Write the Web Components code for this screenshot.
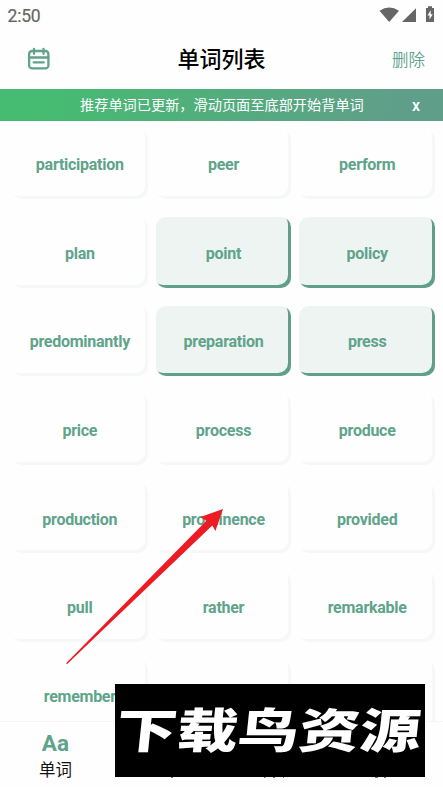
<!DOCTYPE html>
<html lang="zh-CN">
<head>
<meta charset="utf-8">
<title>单词列表</title>
<style>
html,body{margin:0;height:787px;overflow:hidden;background:#fefefe}
</style>
</head>
<body>
<word-app></word-app>
<script>
const define = (name, html) => customElements.define(name, class extends HTMLElement {
  constructor() {
    super();
    const t = document.createElement('template');
    t.innerHTML = html;
    this.attachShadow({mode: 'open'}).append(t.content.cloneNode(true));
  }
});

define('status-bar', `<style>
:host{display:flex;height:30px;align-items:center;justify-content:space-between;padding:0 7px 0 7.5px;box-sizing:border-box;color:#666;font:400 17.5px/30px Roboto,sans-serif}
svg{display:block}
span{padding-top:1px;letter-spacing:-.2px;-webkit-text-stroke:.2px #666}
</style><span>2:50</span>
<svg width="58" height="30" viewBox="378 0 58 30" fill="#666"><path d="M379.5 10.8Q389.2 4 399 10.8L389.2 22Z"/><path d="M416 8.3V22H402Z"/><path fill-rule="evenodd" d="M426 8h2V6.3h4V8h2v14h-8ZM430.7 10.2l-3.2 5.2h2v4.2l3.2-5.4h-2Z"/></svg>`);

define('title-bar', `<style>
:host{display:grid;grid-template-columns:78px 1fr 78px;height:58.5px;align-items:center;font-family:Roboto,"Noto Sans CJK SC",sans-serif;color:#000}
svg{display:block;margin-left:27px}
h1{margin:2px 0 0;text-align:center;font-size:22px;line-height:32px;font-weight:500}
a{color:#60a38b;font-size:16.5px;text-align:right;padding-right:18px;font-weight:350}
</style>
<svg width="24" height="24" viewBox="27 47 24 24" fill="none" stroke="#60a38b" stroke-width="2.3"><rect x="29.1" y="51" width="19.3" height="17.4" rx="3"/><path d="M29 57.5h19.4M34 48.8v5M43.5 48.8v5M33.7 62.4h10" stroke-linecap="round"/></svg>
<h1>单词列表</h1><a>删除</a>`);

define('notice-bar', `<style>
:host{display:flex;height:32px;box-sizing:border-box;align-items:center;justify-content:space-between;padding:0 23px 0 80px;color:#fff;background:linear-gradient(100deg,#45bc71 8%,#5f9f89 88%);font:14.2px/32px "Noto Sans CJK SC",sans-serif}
span{margin-top:-2px}
b{font:500 16px/32px Roboto,sans-serif;padding-top:2px}
</style><span><slot></slot></span><b>x</b>`);

define('word-card', `<style>
:host{display:flex;box-sizing:border-box;height:70.6px;align-items:center;justify-content:center;padding-top:3px;border-radius:10px;background:#fefefe;box-shadow:inset -3px -3px 0 #f6f8f7;color:#60a38b;font:700 16px/20px Roboto,sans-serif;letter-spacing:-.26px;white-space:nowrap}
:host([selected]){background:#edf4f2;box-shadow:inset -3px -3px 0 #629f8a}
</style><slot></slot>`);

define('word-grid', `<style>
:host{display:grid;grid-template-columns:repeat(3,135.6px);column-gap:8.1px;row-gap:18px;padding:8px 0 0 12px;height:600px;box-sizing:border-box;overflow:hidden;align-content:start}
</style><slot></slot>`);

define('nav-bar', `<style>
:host{display:grid;grid-template-columns:repeat(4,1fr);height:66.5px;border-top:1.5px solid #f5f6f6;box-sizing:border-box;background:#fefefe;font-family:Roboto,"Noto Sans CJK SC",sans-serif}
div{display:flex;flex-direction:column;align-items:center}
b{font-size:22.5px;line-height:24px;color:#60a38b;margin-top:9px}
span{font-size:16.5px;line-height:24px;color:#111;margin-top:4px}
</style><div><b>Aa</b><span>单词</span></div>`);

define('pointer-arrow', `<style>
:host{position:absolute;left:0;top:0;width:443px;height:787px;pointer-events:none}
</style><svg width="443" height="787"><path fill="#ed1c24" d="M66 663.3L206.3 520.8 200.5 517 223 509 215.4 531 212.3 525.5 67.2 664Z"/></svg>`);

define('site-stamp', `<style>
:host{position:absolute;left:115px;top:684px;width:310px;height:93px;background:#000;display:flex;align-items:center;justify-content:center}
span{font:900 60px/93px "Noto Sans CJK SC",sans-serif;color:#fff;white-space:nowrap;transform:translate(-1px,-3.5px) skewX(-6deg) scale(1.015,.79)}
svg{position:absolute;left:0;top:93px}
</style><span><slot></slot></span>
<svg width="310" height="2"><path d="M56 .5h2M149 .5h1.5M158 .5h2M168 .5h1M260 .5h3M269 .5h2" stroke="#777"/></svg>`);

const words = 'participation peer perform plan point policy predominantly preparation press price process produce production prominence provided pull rather remarkable remember'.split(' ');
const selected = ['point', 'policy', 'preparation', 'press'];
const cards = words.map(w => `<word-card${selected.includes(w) ? ' selected' : ''}>${w}</word-card>`).join('') + '<word-card></word-card><word-card></word-card>';

define('word-app', `<style>
:host{display:flex;flex-direction:column;position:relative;width:443px;height:787px;overflow:hidden;background:#fefefe}
</style>
<status-bar></status-bar><title-bar></title-bar>
<notice-bar>推荐单词已更新，滑动页面至底部开始背单词</notice-bar>
<word-grid>${cards}</word-grid>
<nav-bar></nav-bar>
<pointer-arrow></pointer-arrow><site-stamp>下载鸟资源</site-stamp>`);
</script>
</body>
</html>
